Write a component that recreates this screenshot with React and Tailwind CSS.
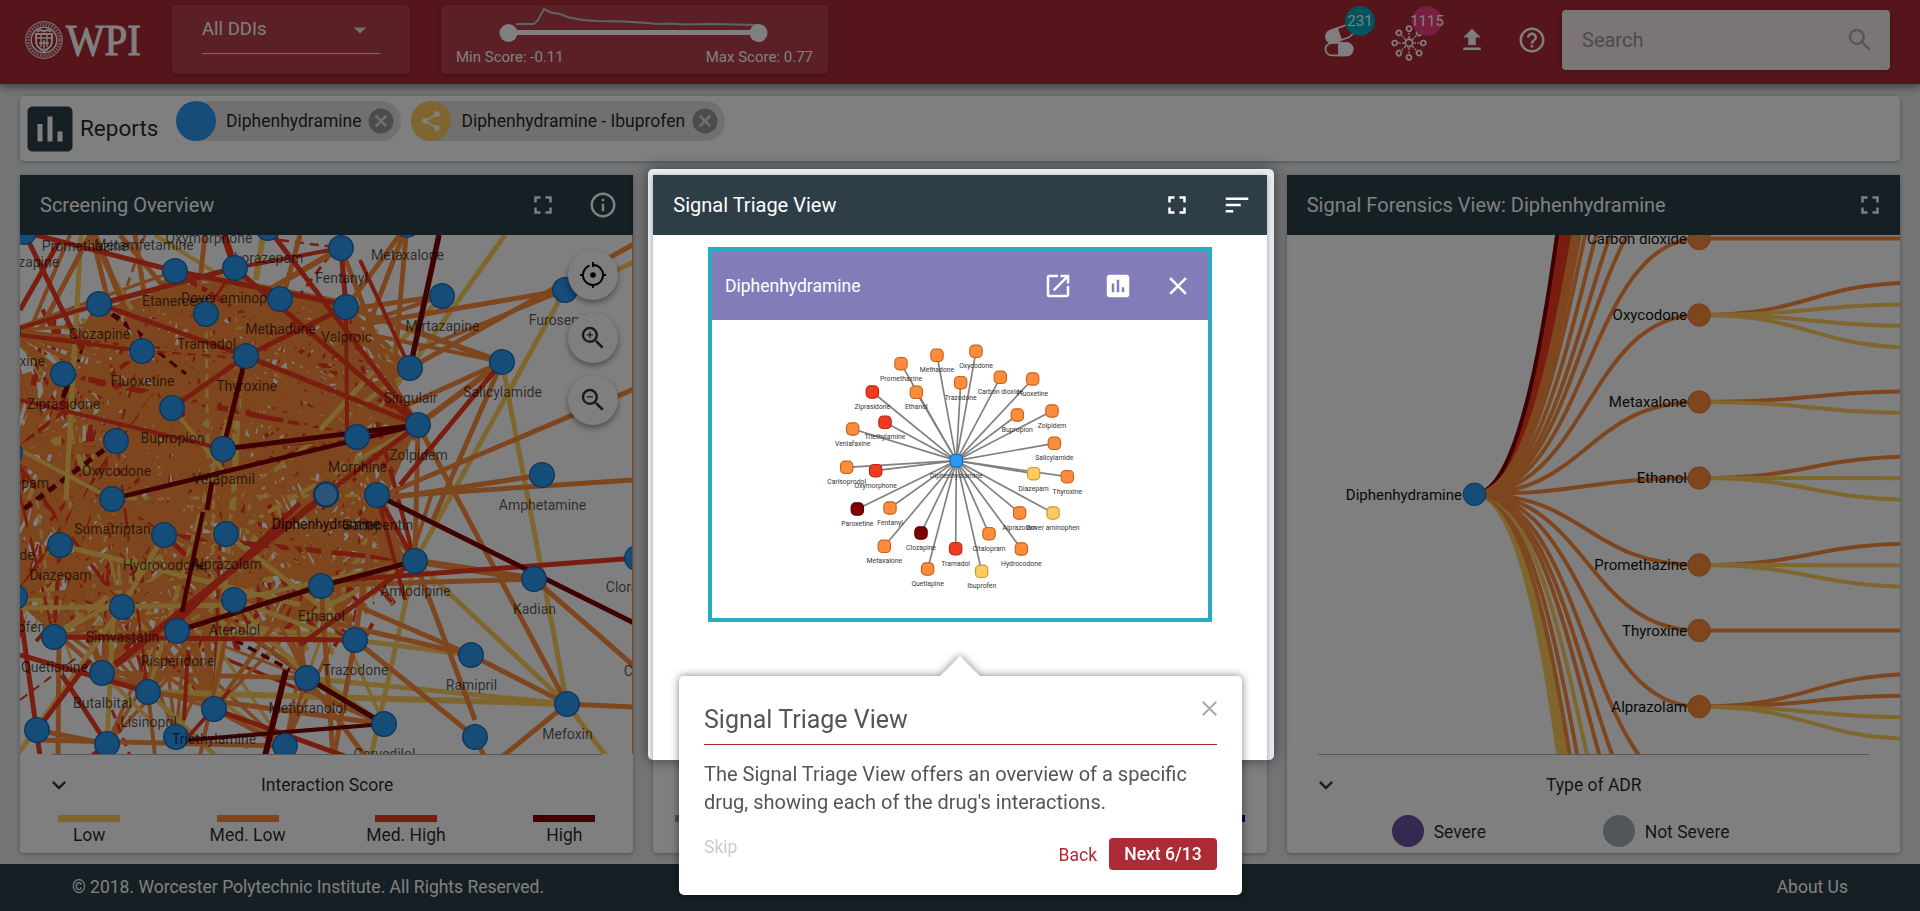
import React from "react";
import {
  MdFullscreen, MdInfoOutline, MdSort, MdOpenInNew, MdInsertChart, MdClose, MdSearch,
  MdExpandMore, MdFileUpload, MdHelpOutline, MdCancel, MdShare, MdArrowDropDown,
  MdZoomIn, MdZoomOut,
} from "react-icons/md";

const Y = "#fecc5c";
const O = "#fd8d3c";
const R = "#f03b20";
const D = "#7f0000";
const B = "#2c98f0";
const BS = "#0d6dbd";

/* ---------- Screening overview network ---------- */

const NODES = [
  [24, 232, "Olanzapine"], [175, 271, "Etanercept"], [235, 268, "Dover aminophen"], [268, 228, "Lorazepam"],
  [341, 248, "Fentanyl"], [280, 299, "Methadone"], [206, 314, "Tramadol"], [99, 304, "Clozapine"],
  [142, 351, "Fluoxetine"], [246, 356, "Thyroxine"], [63, 374, "Ziprasidone"], [172, 408, "Bupropion"],
  [116, 441, "Oxycodone"], [223, 449, "Verapamil"], [112, 499, "Sumatriptan"], [8, 331, "Venlafaxine"],
  [10, 453, "Temazepam"], [346, 307, "Valproic"], [442, 296, "Mirtazapine"], [407, 225, "Metaxalone"],
  [410, 368, "Singulair"], [502, 362, "Salicylamide"], [418, 425, "Zolpidem"], [357, 437, "Morphine"],
  [377, 495, "Gabapentin"], [542, 475, "Amphetamine"], [565, 290, "Furosemide"], [60, 545, "Diazepam"],
  [164, 535, "Hydrocodone"], [226, 534, "Alprazolam"], [122, 607, "Simvastatin"], [234, 600, "Atenolol"],
  [321, 586, "Ethanol"], [54, 637, "Quetiapine"], [177, 631, "Risperidone"], [102, 673, "Butalbital"],
  [148, 692, "Lisinopril"], [307, 678, "Metipranolol"], [37, 730, ""], [107, 744, ""], [176, 737, ""],
  [285, 746, ""], [15, 597, "Ibuprofen"], [415, 561, "Amlodipine"], [534, 579, "Kadian"], [355, 640, "Trazodone"],
  [471, 655, "Ramipril"], [567, 704, "Mefoxin"], [384, 724, "Carvedilol"], [475, 737, ""], [637, 558, ""],
  [214, 709, ""],
];
const FREE_LABELS = [
  [85, 251, "Promethazine"], [144, 250, "Metamfetamine"], [209, 243, "Oxymorphone"], [-12, 560, "Carbon dioxide"],
  [643, 592, "Clorazepate"], [658, 676, "Citalopram"],
];

const EDGES = [
  [Y, 505, 235, 410, 368, 5], [Y, 565, 290, 415, 561, 5], [Y, 502, 362, 567, 704, 5], [Y, 608, 274, 634, 262, 5],
  [Y, 415, 561, 567, 704, 5], [Y, 567, 704, 606, 756, 5], [Y, 567, 704, 307, 678, 5], [Y, 567, 704, 148, 692, 6],
  [Y, 355, 640, 471, 655, 5], [Y, 415, 561, 371, 756, 5], [Y, 81, 235, 66, 500, 5], [Y, 88, 235, 132, 310, 5],
  [Y, 263, 235, 256, 280, 6], [Y, 18, 754, 122, 607, 5], [Y, 15, 608, 234, 605, 5], [Y, 102, 673, 150, 720, 4],
  [Y, 148, 692, 220, 760, 5], [Y, 107, 744, 113, 620, 5], [Y, 60, 545, 300, 605, 5], [Y, 226, 534, 345, 625, 5],
  [Y, 234, 600, 345, 640, 5], [Y, 164, 535, 122, 607, 5], [Y, 442, 296, 320, 430, 5], [Y, 415, 561, 234, 600, 4],
  [Y, 415, 561, 300, 620, 5], [Y, 20, 450, 112, 499, 4], [Y, 172, 408, 223, 470, 4], [Y, 155, 235, 235, 285, 4],
  [O, 565, 290, 330, 330, 5], [O, 634, 244, 410, 368, 5], [O, 565, 290, 418, 350, 4], [O, 502, 362, 346, 307, 6],
  [O, 502, 362, 300, 320, 4], [O, 502, 362, 418, 425, 6], [O, 502, 362, 330, 440, 5], [O, 502, 362, 433, 520, 5],
  [O, 634, 389, 377, 498, 5], [O, 542, 475, 377, 500, 5], [O, 634, 480, 377, 497, 5], [O, 418, 425, 567, 704, 5],
  [O, 418, 425, 415, 561, 5], [O, 415, 561, 534, 579, 7], [O, 534, 579, 634, 666, 5], [O, 534, 579, 335, 585, 5],
  [O, 415, 561, 475, 720, 5], [O, 471, 655, 567, 704, 5], [O, 471, 655, 355, 605, 5], [O, 471, 655, 321, 620, 5],
  [O, 355, 640, 475, 737, 5], [O, 567, 704, 634, 707, 5], [O, 567, 704, 503, 756, 5], [O, 475, 737, 485, 758, 5],
  [O, 407, 225, 340, 400, 5], [O, 407, 225, 395, 360, 5], [O, 407, 225, 341, 315, 5], [O, 442, 296, 200, 330, 5],
  [O, 442, 296, 300, 345, 4], [O, 410, 368, 340, 320, 4], [O, 377, 495, 355, 640, 5], [O, 433, 490, 410, 561, 4],
  [O, 37, 730, 107, 744, 5], [O, 37, 740, 285, 746, 5], [O, 59, 640, 58, 756, 5], [O, 148, 692, 384, 724, 5],
  [O, 148, 692, 155, 756, 4], [O, 341, 248, 200, 330, 6], [O, 341, 248, 415, 440, 5], [O, 418, 425, 346, 307, 5],
  [O, 90, 235, 40, 330, 5], [O, 92, 235, 108, 300, 5], [O, 95, 235, 142, 351, 6], [O, 70, 235, 30, 330, 4],
  [O, 135, 235, 150, 330, 5], [O, 120, 235, 175, 300, 5], [O, 205, 235, 198, 300, 5], [O, 300, 235, 285, 290, 5],
  [O, 355, 640, 334, 756, 5], [O, 321, 586, 333, 756, 5], [O, 307, 678, 365, 756, 5], [O, 384, 724, 307, 690, 5],
  [O, 234, 600, 200, 756, 4], [O, 214, 709, 285, 746, 5], [O, 307, 678, 285, 746, 4], [O, 102, 673, 148, 692, 5],
  [R, 24, 232, 175, 271, 5], [R, 24, 232, 82, 350, 5], [R, 20, 328, 99, 304, 4], [R, 60, 240, 20, 310, 5],
  [R, 99, 304, 235, 268, 5], [R, 235, 268, 341, 248, 4], [R, 99, 304, 246, 356, 5], [R, 246, 356, 418, 425, 5],
  [R, 246, 356, 346, 307, 5], [R, 246, 356, 172, 408, 5], [R, 235, 268, 418, 425, 5], [R, 268, 228, 418, 425, 5],
  [R, 341, 248, 346, 307, 5], [R, 224, 235, 235, 268, 7], [R, 175, 271, 346, 305, 5], [R, 20, 335, 142, 351, 4],
  [R, 20, 400, 223, 449, 4], [R, 502, 362, 400, 485, 5], [R, 418, 425, 326, 494, 5], [R, 377, 495, 415, 561, 5],
  [R, 637, 558, 345, 580, 5], [R, 415, 561, 300, 645, 5], [R, 346, 640, 54, 637, 5], [R, 326, 494, 115, 665, 7],
  [R, 300, 503, 180, 620, 5], [R, 20, 655, 148, 692, 5], [R, 62, 675, 107, 744, 5], [R, 20, 610, 40, 756, 5],
  [R, 90, 660, 37, 730, 5], [R, 214, 709, 350, 758, 5], [R, 107, 744, 92, 756, 5], [R, 377, 495, 405, 600, 4],
  [R, 346, 307, 347, 430, 4], [R, 410, 368, 360, 260, 4], [R, 230, 690, 188, 737, 4], [R, 188, 650, 184, 720, 4],
  [D, 439, 235, 410, 368, 5.5], [D, 223, 449, 418, 425, 5], [D, 112, 499, 418, 425, 4.5], [D, 246, 356, 223, 449, 5],
  [D, 377, 495, 640, 626, 5], [D, 321, 586, 415, 561, 5], [D, 177, 631, 321, 586, 5],
  [D, 307, 678, 384, 724, 5], [D, 176, 741, 384, 724, 4], [D, 286, 670, 265, 756, 6], [D, 68, 384, 63, 398, 5],
  [D, 212, 482, 207, 510, 5], [D, 203, 512, 182, 612, 4.5],
];
const DASHED = [
  [D, 112, 314, 142, 336, 5], [D, 83, 345, 78, 362, 3], [D, 116, 441, 20, 512, 5], [D, 158, 352, 186, 374, 3],
  [D, 235, 640, 290, 670, 3.5], [R, 280, 240, 341, 248, 2.5], [R, 142, 351, 246, 358, 2], [R, 20, 700, 80, 655, 2],
  [O, 145, 235, 122, 300, 3], [R, 330, 255, 296, 300, 3], [Y, 206, 314, 208, 460, 3], [Y, 37, 500, 52, 620, 3],
  [Y, 214, 470, 212, 620, 3], [R, 112, 710, 130, 756, 3], [Y, 246, 740, 247, 756, 3],
];

function seeded(seed) {
  let s = seed;
  return () => {
    s = (s * 1664525 + 1013904223) % 4294967296;
    return s / 4294967296;
  };
}

const CORE = "20,375 60,362 100,310 180,285 240,280 345,300 385,390 418,425 385,500 405,560 350,625 300,640 250,625 170,640 60,630 20,600";

function buildTangle() {
  const rnd = seeded(77);
  const hub = NODES.filter(([x, y]) => x < 425 && y > 260 && y < 715);
  const upper = hub.filter(([, y]) => y < 610);
  // Gaps and stray edge pieces that show between the heavier edges.
  const flecks = [];
  for (let i = 0; i < 900; i++) {
    const x = 22 + rnd() * 365;
    const y = 305 + rnd() * 325;
    const a = Math.PI * (0.22 + rnd() * 0.56);
    const l = 10 + rnd() * 28;
    const k = rnd();
    const c = k < 0.42 ? "#ffffff" : k < 0.74 ? R : Y;
    flecks.push([c, x, y, x + Math.cos(a) * l, y + Math.sin(a) * l, 1.5 + rnd() * 4.5]);
  }
  const lines = [];
  for (let i = 0; i < 300; i++) {
    const p = hub[Math.floor(rnd() * hub.length)];
    const q = hub[Math.floor(rnd() * hub.length)];
    const k = rnd();
    if (p === q) continue;
    const low = p[1] > 600 || q[1] > 600;
    if (low && rnd() < 0.4) continue;
    const c = low ? (k < 0.6 ? O : k < 0.75 ? R : Y) : k < 0.84 ? O : k < 0.95 ? R : Y;
    lines.push([c, p[0], p[1], q[0], q[1], 2.5 + rnd() * 3]);
  }
  const cover = [];
  for (let i = 0; i < 60; i++) {
    const p = upper[Math.floor(rnd() * upper.length)];
    const q = upper[Math.floor(rnd() * upper.length)];
    cover.push([O, p[0], p[1], q[0], q[1], 3 + rnd() * 3]);
  }
  const rays = [];
  const low = NODES.filter(([x, y]) => x < 400 && y > 660);
  for (let i = 0; i < 34; i++) {
    const q = low[Math.floor(rnd() * low.length)];
    const k = rnd();
    rays.push([k < 0.55 ? O : k < 0.75 ? R : Y, q[0], q[1], 40 + rnd() * 330, 540 + rnd() * 60, 3.5]);
  }
  return { flecks, lines, rays, cover };
}
const TANGLE = buildTangle();

const Lines = ({ data, dash }) =>
  data.map(([c, x1, y1, x2, y2, w], i) => (
    <line key={i} x1={x1} y1={y1} x2={x2} y2={y2} stroke={c} strokeWidth={w} strokeDasharray={dash} />
  ));

function OverviewGraph() {
  return (
    <svg className="block h-[519px] w-[613px]" viewBox="20 235 613 519">
      <polygon points={CORE} fill={O} />
      <Lines data={TANGLE.rays} />
      <Lines data={TANGLE.flecks} />
      <Lines data={TANGLE.lines} />
      <Lines data={TANGLE.cover} />
      <Lines data={DASHED} dash="9 6" />
      <Lines data={EDGES} />
      <g fontSize="14" textAnchor="middle" fill="#000" fillOpacity="0.66" className="font-[Roboto,sans-serif]">
        {NODES.map(([x, y, t], i) => (t ? <text key={i} x={x + 0.5} y={y + 35}>{t}</text> : null))}
        {FREE_LABELS.map(([x, y, t]) => <text key={t} x={x} y={y}>{t}</text>)}
      </g>
      {NODES.map(([x, y], i) => (
        <circle key={i} cx={x} cy={y} r="12.3" fill={B} stroke={BS} strokeWidth="1.3" />
      ))}
      <circle cx="326" cy="494.5" r="12" fill="#56a9ee" stroke="#0d6dbd" strokeWidth="2.4" />
      <text x="326" y="529" fontSize="14" stroke="#000" strokeOpacity="0.4" strokeWidth="0.3" textAnchor="middle" fill="#000" fillOpacity="0.8">Diphenhydramine</text>
      <text x="214" y="744" fontSize="14" textAnchor="middle" fill="#000" fillOpacity="0.66">Triethylamine</text>
      <line x1="632.5" x2="632.5" y1="235" y2="754" stroke={O} />
    </svg>
  );
}

/* ---------- Drug star graph ---------- */

const STAR = [
  [303, 101, O, "Promethazine"], [411, 76, O, "Methadone"], [528, 64, O, "Oxycodone"], [482, 158, O, "Trazodone"],
  [601, 142, O, "Carbon dioxide"], [698, 147, O, "Fluoxetine"], [217, 186, R, "Ziprasidone"], [349, 187, O, "Ethanol"],
  [652, 255, O, "Bupropion"], [756, 243, O, "Zolpidem"], [255, 277, R, "Triethylamine"], [158, 297, O, "Venlafaxine"],
  [763, 340, O, "Salicylamide"], [140, 412, O, "Carisoprodol"], [227, 422, R, "Oxymorphone"], [701, 431, Y, "Diazepam"],
  [802, 440, O, "Thyroxine"], [172, 537, D, "Paroxetine"], [270, 534, O, "Fentanyl"], [659, 549, O, "Alprazolam"],
  [759, 549, Y, "Dover aminophen"], [363, 609, D, "Clozapine"], [567, 611, O, "Citalopram"], [253, 649, O, "Metaxalone"],
  [467, 656, R, "Tramadol"], [664, 657, O, "Hydrocodone"], [383, 717, O, "Quetiapine"], [545, 724, Y, "Ibuprofen"],
];
const EDGE_TONE = { [O]: "#c8621a", [R]: "#bb2410", [Y]: "#c39a35", [D]: "#5c0000", [B]: "#0d6dbd" };

function StarNode({ x, y, c }) {
  return <rect x={x - 18.5} y={y - 18.5} width="37" height="37" rx="13" fill={c} stroke={EDGE_TONE[c]} strokeWidth="3.5" />;
}

function StarGraph() {
  return (
    <svg className="mx-auto block h-[280px] w-[310px]" viewBox="0 0 930 840">
      {STAR.map(([x, y, , t]) => <line key={t} x1="469" y1="392" x2={x} y2={y} stroke="#808080" strokeWidth="5" />)}
      <g fontSize="20.4" textAnchor="middle" fill="#333" className="font-[Roboto,sans-serif]">
        {STAR.map(([x, y, , t]) => <text key={t} x={x} y={y + 51}>{t}</text>)}
        <text x="469" y="443">Diphenhydramine</text>
      </g>
      {STAR.map(([x, y, c, t]) => <StarNode key={t} x={x} y={y} c={c} />)}
      <StarNode x={469} y={392} c={B} />
    </svg>
  );
}

/* ---------- Forensics tree ---------- */

const BRANCHES = [
  [238.5, "Carbon dioxide", [[238.5, O]]],
  [315, "Oxycodone", [[282.5, O], [304.3, Y], [326, Y], [347.8, Y]]],
  [402, "Metaxalone", [[391.3, O], [413, Y]]],
  [478, "Ethanol", [[456.5, O], [478.2, Y], [500, Y]]],
  [565, "Promethazine", [[543.5, O], [565.3, Y], [587, Y]]],
  [630.5, "Thyroxine", [[630.5, O]]],
  [706.7, "Alprazolam", [[674, O], [695.6, O], [717.4, Y], [739, Y]]],
];
const OFFSCREEN = [
  ...[-470, -450, -430, -410, -390, -370, -350, -330, -310, -295, -280, -265, -235, -222].map((v) => [v, R]),
  [-520, D],
  [-185, O], [-165, O], [-148, O], [-133, O], [-95, O], [-40, O], [49, O], [124, O], [176, O],
  ...[1480, 1450, 1420, 1390, 1360, 1330, 1300, 1275].map((v) => [v, Y]),
  [1235, O], [1121, O], [1014, Y], [922, O], [859, O], [792, O],
];
const link = (x1, y1, x2, y2) => `M${x1},${y1}C${(x1 + x2) / 2},${y1} ${(x1 + x2) / 2},${y2} ${x2},${y2}`;

function TreeGraph() {
  return (
    <svg className="block h-[519px] w-[613px]" viewBox="1287 235 613 519">
      <g fill="none" strokeWidth="4">
        {OFFSCREEN.map(([y, c], i) => <path key={i} d={link(1474.5, 494, 1699, y)} stroke={c} />)}
        {BRANCHES.map(([y, t, kids]) => (
          <g key={t}>
            <path d={link(1474.5, 494, 1699, y)} stroke={O} />
            {kids.map(([ky, c]) => <path key={ky} d={link(1699, y, 1923.5, ky)} stroke={c} />)}
          </g>
        ))}
      </g>
      <g fontSize="15" textAnchor="end" fill="#111">
        {BRANCHES.map(([y, t]) => (
          <g key={t}>
            <circle cx="1699.2" cy={y} r="11.2" fill={O} stroke="#e67a2b" />
            <text x="1687" y={y + 5}>{t}</text>
          </g>
        ))}
        <circle cx="1474.500" cy="494.300" r="11.300" fill={B} stroke={BS} />
        <text x="1462" y="500">Diphenhydramine</text>
      </g>
    </svg>
  );
}

/* ---------- Icons and logo ---------- */

function WpiLogo() {
  return (
    <svg className="h-[48px] w-[120px]" viewBox="22 16 120 48">
      <g fill="none" stroke="#fff">
        <circle cx="44" cy="40" r="18.3" strokeWidth="1" />
        <circle cx="44" cy="40" r="15.7" strokeWidth="3.4" strokeDasharray="1.8 1.2" opacity="0.6" />
        <circle cx="44" cy="40" r="12.8" strokeWidth="1.5" />
      </g>
      <path d="M36 34h16v7c0 5-3.500 8-8 10-4.500-2-8-5-8-10z" fill="none" stroke="#fff" strokeWidth="2" />
      <path d="M37 38h14M41 34v13M47 34v13M44 40v9M39 43h10" stroke="#fff" strokeWidth="1.400" />
      <path d="M37 31.500q3.500-2.500 7 0q3.500-2.500 7 0" stroke="#fff" strokeWidth="2" fill="none" />
      <text x="66" y="54.500" fontSize="44" stroke="#fff" strokeWidth="1" textLength="75" lengthAdjust="spacingAndGlyphs" fill="#fff" className="font-['Liberation_Serif',serif]">WPI</text>
    </svg>
  );
}

function PillsIcon() {
  return (
    <svg className="h-[36px] w-[32px]" viewBox="0 0 32 36" fill="none" stroke="#fff" strokeWidth="1.700">
      <rect x="1.500" y="22" width="27" height="12.400" rx="6.200" />
      <path d="M15 22h7.500a6.200 6.200 0 0 1 0 12.400H15z" fill="#fff" />
      <g transform="rotate(-20 15 13)">
        <rect x="1.500" y="7" width="28" height="12.400" rx="6.200" />
        <path d="M15 7H7.700a6.200 6.200 0 0 0 0 12.400H15z" fill="#fff" />
      </g>
    </svg>
  );
}

function NetworkIcon() {
  const spokes = [0, 45, 90, 135, 180, 225, 270, 315];
  return (
    <svg className="h-[38px] w-[38px]" viewBox="-19 -19 38 38" fill="none" stroke="#fff">
      <circle r="3.700" strokeWidth="1.900" />
      {spokes.map((a) => (
        <g key={a} transform={`rotate(${a})`}>
          <circle cx="14.300" r="2.500" strokeWidth="1.700" />
          <line x1="5" x2="12" strokeWidth="1.400" strokeDasharray="2 1.300" />
        </g>
      ))}
    </svg>
  );
}

function TargetIcon() {
  return (
    <svg className="h-[28px] w-[28px]" viewBox="-14 -14 28 28" fill="none" stroke="#000" strokeWidth="2">
      <path d="M-3.400 -9.400A10 10 0 1 0 0 -10" />
      <circle r="2.800" fill="#000" stroke="none" />
      <path d="M0 -13v5M0 9v4M-13 0h4M9 0h4" />
    </svg>
  );
}

/* ---------- Layout pieces ---------- */

const IconBox = ({ children }) => (
  <div className="flex h-[60px] w-[60px] shrink-0 items-center justify-center text-[30px]">{children}</div>
);

function Panel({ title, icons, children }) {
  return (
    <section className="flex h-[678px] w-[613.330px] flex-col overflow-hidden rounded-b bg-white shadow-[0_1px_5px_rgba(0,0,0,0.3)]">
      <header className="flex h-[60px] shrink-0 items-center bg-[#2d3e47] pl-5 text-white">
        <h2 className="flex-1 text-[20px]">{title}</h2>
        {icons}
      </header>
      {children}
    </section>
  );
}

const LegendTitle = ({ children }) => (
  <div className="mx-[31px] flex h-[61px] items-center border-t border-[#aab0b2] text-[17.500px] text-black/85">
    <MdExpandMore className="-mt-px -ml-[6px] size-[28px] text-[#2d3e47]" />
    <span className="flex-1 pr-[21px] text-center">{children}</span>
  </div>
);

const ScoreItem = ({ color, label }) => (
  <div className="flex w-[158.400px] shrink-0 flex-col items-center">
    <div className={`h-[7px] w-[62px] ${color}`} />
    <span className="text-[17.500px] leading-[26px] text-black/85">{label}</span>
  </div>
);

const Chip = ({ avatar, label }) => (
  <div className="flex h-10 items-center rounded-full bg-[#e0e0e0] pr-[5px]">
    {avatar}
    <span className="px-[10px] pt-px text-[17.500px] text-black/85">{label}</span>
    <MdCancel className="-ml-[5px] size-[30px] text-[#989898]" />
  </div>
);

export default function App() {
  return (
    <div className="relative flex h-[911px] w-[1920px] flex-col overflow-hidden bg-[#e6e9ed] font-[Roboto,sans-serif] text-black">
      <header className="relative flex h-[84px] shrink-0 items-start bg-[#ac2b37] pl-[22px] text-white shadow-[0_3px_8px_rgba(0,0,0,0.45)]">
        <div className="mt-4 w-[150px]"><WpiLogo /></div>
        <div className="mt-[5px] h-[69px] w-[238px] rounded-sm bg-white/10 px-[30px] shadow-[0_1px_4px_rgba(0,0,0,0.25)]">
          <div className="flex h-[49px] w-[178px] items-center justify-between border-b border-white/80 text-[18.500px]">
            <span className="pt-[2px]">All DDIs</span>
            <MdArrowDropDown className="mt-[2px] mr-[5px] size-[30px] opacity-80" />
          </div>
        </div>
        <div className="mt-[5px] ml-[31px] flex h-[69px] w-[387px] flex-col rounded-sm bg-white/10 shadow-[0_1px_4px_rgba(0,0,0,0.25)]">
          <svg className="h-[41px] w-[387px] shrink-0" viewBox="441 5 387 41">
            <polyline fill="none" stroke="#c5c7ca" strokeWidth="2" points="516,24 534,24 538,20 544,9 551,12.500 560,14 569,17.500 583,20 597,21 624,21.500 648,23 656,24 669,23.500 685,24.500 712,24 758,25" />
            <line x1="508" x2="758" y1="32.500" y2="32.500" stroke="#fff" strokeWidth="5" />
            <circle cx="508.500" cy="33" r="9" fill="#fff" />
            <circle cx="758.500" cy="33" r="9" fill="#fff" />
          </svg>
          <div className="flex justify-between pr-[15px] pl-[15px] text-[15px] leading-[22px]">
            <span>Min Score: -0.11</span>
            <span>Max Score: 0.77</span>
          </div>
        </div>
        <div className="ml-[496px] flex">
          <div className="relative mt-[21px] w-[66px]">
            <PillsIcon />
            <span className="absolute -top-[15px] left-[21px] flex size-[30px] items-center justify-center rounded-full bg-[#00a9bd] text-[15px]">231</span>
          </div>
          <div className="relative mt-[24px] w-[66px]">
            <NetworkIcon />
            <span className="absolute -top-[18px] left-[22px] flex size-[30px] items-center justify-center rounded-full bg-[#f03c7f] text-[15px]">1115</span>
          </div>
          <div className="mt-[25px] ml-[1px] flex gap-[30px] text-[30px]">
            <MdFileUpload />
            <MdHelpOutline />
          </div>
        </div>
        <div className="mt-[10px] ml-[15px] flex h-[60px] w-[328px] items-center justify-between rounded-sm bg-white/90 pr-[15px] pl-5 text-[20px] text-[#9c9595] shadow-[0_1px_4px_rgba(0,0,0,0.3)]">
          <span>Search</span>
          <MdSearch className="size-[30px] text-[#b3abab]" />
        </div>
      </header>

      <div className="mx-5 mt-3 flex h-[65px] shrink-0 rounded-sm bg-white shadow-[0_1px_4px_rgba(0,0,0,0.3)]">
        <MdInsertChart className="mt-[2.500px] size-[60px] shrink-0 text-[#2d3e47]" />
        <span className="flex h-[65px] w-[96px] items-center text-[22.500px] text-black/85">Reports</span>
        <div className="mt-[5px] flex gap-[10px]">
          <Chip label="Diphenhydramine" avatar={<div className="size-10 rounded-full bg-[#2c98f0]" />} />
          <Chip
            label="Diphenhydramine - Ibuprofen"
            avatar={<div className="flex size-10 items-center justify-center rounded-full bg-[#fecc5c] text-[24px] text-white"><MdShare /></div>}
          />
        </div>
      </div>

      <main className="mx-5 mt-[14px] flex h-[678px] shrink-0 justify-between">
        <Panel title="Screening Overview" icons={<><IconBox><MdFullscreen /></IconBox><IconBox><MdInfoOutline /></IconBox></>}>
          <div className="relative h-[519px] shrink-0">
            <OverviewGraph />
            <div className="absolute top-[15px] right-[15px] flex flex-col gap-[12.500px] text-[30px] text-[#333]">
              <div className="flex size-[50px] items-center justify-center rounded-full bg-white shadow-[0_3px_6px_rgba(0,0,0,0.4)]"><TargetIcon /></div>
              <div className="flex size-[50px] items-center justify-center rounded-full bg-white shadow-[0_3px_6px_rgba(0,0,0,0.4)]"><MdZoomIn /></div>
              <div className="flex size-[50px] items-center justify-center rounded-full bg-white shadow-[0_3px_6px_rgba(0,0,0,0.4)]"><MdZoomOut /></div>
            </div>
          </div>
          <LegendTitle>Interaction Score</LegendTitle>
          <div className="-ml-[10px] flex">
            <ScoreItem color="bg-[#fecc5c]" label="Low" />
            <ScoreItem color="bg-[#fd8d3c]" label="Med. Low" />
            <ScoreItem color="bg-[#f03b20]" label="Med. High" />
            <ScoreItem color="bg-[#7f0000]" label="High" />
          </div>
        </Panel>

        <Panel title="Signal Triage View" icons={<><IconBox><MdFullscreen /></IconBox><IconBox><MdSort /></IconBox></>}>
          <div className="mx-auto mt-3 h-[375px] w-[504px] border-4 border-[#29acc0]">
            <div className="flex h-[69px] items-center bg-[#827cb9] pt-px pl-[13px] text-white">
              <span className="flex-1 pt-px text-[17.500px]">Diphenhydramine</span>
              <IconBox><MdOpenInNew /></IconBox>
              <IconBox><MdInsertChart /></IconBox>
              <IconBox><MdClose /></IconBox>
            </div>
            <div className="-ml-[10px] pt-[10px]"><StarGraph /></div>
          </div>
          <div className="mt-[193px] flex justify-between pr-[22px] pl-[22px]">
            <div className="h-[7px] w-[62px] bg-[#a0a0a0]" />
            <div className="h-[7px] w-[62px] bg-[#3f007d]" />
          </div>
        </Panel>

        <Panel title="Signal Forensics View: Diphenhydramine" icons={<IconBox><MdFullscreen /></IconBox>}>
          <TreeGraph />
          <LegendTitle>Type of ADR</LegendTitle>
          <div className="flex h-[32px] items-center pl-[105px] text-[17.500px] text-black/85">
            <div className="size-[32px] rounded-full bg-[#6a51a3]" />
            <span className="w-[169px] pt-[2px] pl-[10px]">Severe</span>
            <div className="ml-[10px] size-[32px] rounded-full bg-[#a4adb3]" />
            <span className="pt-[2px] pl-[10px]">Not Severe</span>
          </div>
        </Panel>
      </main>

      <footer className="mt-[11px] flex h-[47px] shrink-0 items-center justify-between bg-[#2d3e47] pr-[72px] pl-[72px] text-[17.500px] text-white">
        <span>© 2018. Worcester Polytechnic Institute. All Rights Reserved.</span>
        <span>About Us</span>
      </footer>

      <div className="absolute top-[169px] left-[648px] h-[591px] w-[626px] rounded-[5px] shadow-[0_0_0_9999px_rgba(0,0,0,0.5),0_0_15px_rgba(0,0,0,0.5)]" />

      <div className="absolute top-[656px] left-[679px] flex w-[563px] flex-col [filter:drop-shadow(0_0_4px_rgba(0,0,0,0.5))]">
        <svg className="ml-[261px] h-5 w-10" viewBox="0 0 40 20"><polygon points="0,20 20,0 40,20" fill="#fff" /></svg>
        <div className="flex h-[219px] w-full flex-col rounded-[5px] bg-white px-[25px] text-[#555]">
          <div className="flex h-[69px] justify-between border-b border-[#ac2b37]">
            <span className="pt-[28px] text-[25px] leading-[32px]">Signal Triage View</span>
            <svg className="mt-[25px] size-[15px]" viewBox="0 0 15 15"><path d="M.7.700l13.600 13.600M14.300.7L.7 14.300" stroke="#aaa" strokeWidth="2" /></svg>
          </div>
          <p className="pt-[15px] text-[20px] leading-[28px]">The Signal Triage View offers an overview of a specific<br />drug, showing each of the drug's interactions.</p>
          <div className="flex pt-[22px] text-[17.500px]">
            <span className="flex-1 leading-[18px] text-[#ccc]">Skip</span>
            <span className="pr-[12px] leading-[34px] text-[#ac2b37]">Back</span>
            <span className="flex h-8 w-[108px] items-center justify-center rounded bg-[#ac2b37] pt-px font-medium text-white">Next 6/13</span>
          </div>
        </div>
      </div>
    </div>
  );
}
